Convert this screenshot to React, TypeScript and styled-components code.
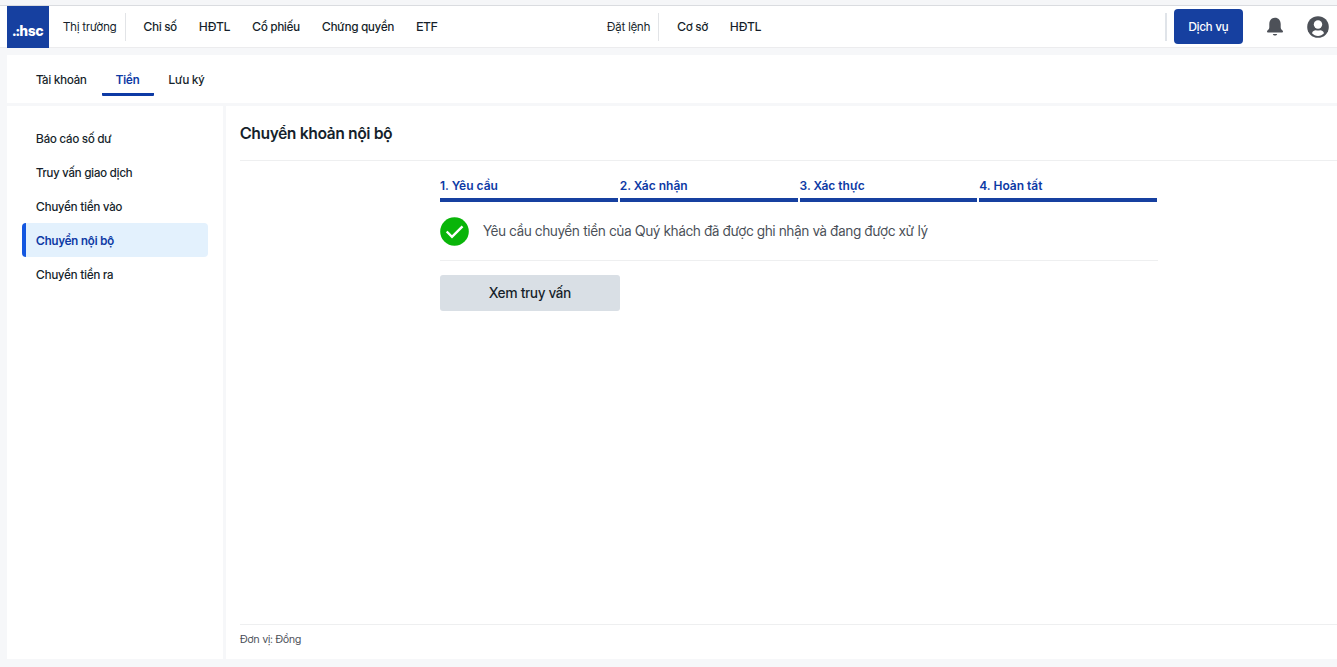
import React from "react";
import styled, { createGlobalStyle, css } from "styled-components";

const color = {
  brand: "#1640a0",
  link: "#0d3aa5",
  text: "#161f2b",
  muted: "#4a4f57",
  line: "#eeeff0",
  page: "#f6f7f9",
};

const GlobalStyle = createGlobalStyle`
  *, *::before, *::after { box-sizing: border-box; }
  body {
    margin: 0;
    background: ${color.page};
    color: ${color.text};
    font-family: "Inter Display", Inter, sans-serif;
    font-size: 12px;
    line-height: 16px;
  }
  a { color: inherit; text-decoration: none; }
  button { font-family: inherit; border: 0; cursor: pointer; }
`;

const Page = styled.div`
  min-height: 100vh;
  display: flex;
  flex-direction: column;
  padding-bottom: 8px;
`;

const TopStrip = styled.div`
  height: 6px;
  background: #f5f6f8;
  border-bottom: 1px solid #dadce0;
`;

const Header = styled.header`
  display: flex;
  align-items: center;
  height: 42px;
  padding: 0 8px 0 7px;
  background: #fff;
  border-bottom: 1px solid #ececee;
`;

const Logo = styled.a`
  display: flex;
  align-items: center;
  justify-content: center;
  width: 42px;
  height: 42px;
  padding-top: 8px;
  background: ${color.brand};
  color: #fff;
  font-size: 14px;
  font-weight: 800;
`;

const NavGroup = styled.nav<{ $wide?: boolean }>`
  display: flex;
  align-items: center;
  gap: 22px;
  white-space: nowrap;
  ${(p) => p.$wide && css`flex: 0 1 544px;`}
`;

const GroupTitle = styled.span`
  display: flex;
  align-items: center;
  height: 28px;
  padding-right: 8px;
  margin-right: -4px;
  border-right: 1px solid #e2e4e7;
`;

const NavLink = styled.a`
  font-weight: 500;
`;

const Actions = styled.div`
  display: flex;
  align-items: center;
  margin-left: auto;
  padding-left: 7px;
  border-left: 2px solid #e0e4e9;
  height: 28px;
`;

const ServiceButton = styled.button`
  width: 69px;
  height: 35px;
  padding: 0;
  margin-right: 21px;
  border-radius: 4px;
  background: ${color.brand};
  color: #fff;
  font-size: 12px;
  font-weight: 500;
`;

const IconButton = styled.button`
  display: flex;
  padding: 0;
  background: none;
  color: #4d5158;
  & + & { margin-left: 21px; }
`;

const Tabs = styled.nav`
  display: flex;
  gap: 1px;
  height: 48px;
  margin: 7px 0 0 7px;
  padding: 7px 15px;
  background: #fff;
`;

const Tab = styled.a<{ $active?: boolean }>`
  display: flex;
  align-items: center;
  height: 34px;
  padding: 4px 14px 0;
  border-bottom: 3px solid ${(p) => (p.$active ? color.link : "transparent")};
  border-radius: 1px;
  color: ${(p) => (p.$active ? color.link : "inherit")};
  font-weight: ${(p) => (p.$active ? 600 : 500)};
`;

const Body = styled.div`
  display: flex;
  flex: 1;
  gap: 3px;
  margin: 3px 0 0 7px;
`;

const Sidebar = styled.nav`
  width: 216px;
  flex: none;
  padding: 15px;
  background: #fff;
`;

const SideLink = styled.a<{ $active?: boolean }>`
  display: flex;
  align-items: center;
  height: 34px;
  padding: 2px 0 0 10px;
  border-left: 4px solid transparent;
  border-radius: 4px;
  font-weight: 500;
  ${(p) =>
    p.$active &&
    css`
      border-left-color: #1457e0;
      background: #e3f1fd;
      color: ${color.link};
      font-weight: 600;
    `}
`;

const Main = styled.main`
  display: flex;
  flex: 1;
  flex-direction: column;
  min-width: 0;
  padding-left: 14px;
  background: #fff;
`;

const Title = styled.h1`
  margin: 0;
  padding: 17px 0 16px;
  border-bottom: 1px solid ${color.line};
  font-size: 16px;
  line-height: 21px;
  font-weight: 600;
`;

const Transfer = styled.section`
  flex: 1;
  padding: 15px 179px 15px 200px;
`;

const Steps = styled.ol`
  display: grid;
  grid-template-columns: repeat(4, 1fr);
  gap: 2px;
  margin: 0;
  padding: 0 1px 0 0;
  list-style: none;
`;

const Step = styled.li`
  height: 26px;
  padding-top: 2px;
  border-bottom: 4px solid ${color.brand};
  color: ${color.link};
  font-family: Inter, sans-serif;
  font-weight: 600;
`;

const Notice = styled.div`
  display: flex;
  align-items: center;
  gap: 14px;
  height: 59px;
  border-bottom: 1px solid ${color.line};
  color: ${color.muted};
  font-size: 14px;
`;

const QueryButton = styled.button`
  width: 180px;
  height: 36px;
  margin-top: 14px;
  padding: 0 0 2px;
  border-radius: 3px;
  background: #d9dfe5;
  color: ${color.text};
  font-size: 14px;
  font-weight: 500;
`;

const Footer = styled.footer`
  padding: 6px 0 12px;
  border-top: 1px solid ${color.line};
  color: ${color.muted};
  font-size: 11px;
`;

const BellIcon = () => (
  <svg width="22" height="22" viewBox="0 0 22 22" fill="currentColor" aria-hidden="true">
    <path d="M11 1.700C7.600 1.700 5.300 4.200 5.300 8v3.200c0 1.700-.8 2.400-1.800 3.200-.9.800-.5 2.100.8 2.100h13.400c1.300 0 1.700-1.300.8-2.100-1-.8-1.800-1.500-1.800-3.200V8c0-3.800-2.300-6.300-5.700-6.300Z" />
    <path d="M8.800 18h4.400c-.4 1-1.200 1.500-2.200 1.500s-1.800-.5-2.200-1.500Z" />
  </svg>
);

const UserIcon = () => (
  <svg width="22" height="22" viewBox="0 0 22 22" aria-hidden="true">
    <circle cx="11" cy="11" r="10.800" fill="currentColor" />
    <circle cx="11" cy="8.500" r="4.200" fill="#fff" />
    <path d="M5 17.300c.6-2.200 2.300-3 3.600-3 .8 0 1.200.3 2.400.3s1.600-.3 2.400-.3c1.300 0 3 .8 3.600 3-1.500 1.600-3.600 2.600-6 2.600s-4.500-1-6-2.600Z" fill="#fff" />
  </svg>
);

const CheckIcon = () => (
  <svg width="29" height="29" viewBox="0 0 29 29" aria-hidden="true">
    <circle cx="14.500" cy="14.500" r="14.300" fill="#09b509" />
    <path d="M6.700 14.500l5.300 5.300L22.500 9.300" fill="none" stroke="#fff" strokeWidth="2.400" />
  </svg>
);

const marketLinks = ["Chỉ số", "HĐTL", "Cổ phiếu", "Chứng quyền", "ETF"];
const orderLinks = ["Cơ sở", "HĐTL"];
const tabs = ["Tài khoản", "Tiền", "Lưu ký"];
const sideLinks = [
  "Báo cáo số dư",
  "Truy vấn giao dịch",
  "Chuyển tiền vào",
  "Chuyển nội bộ",
  "Chuyển tiền ra",
];
const steps = ["1. Yêu cầu", "2. Xác nhận", "3. Xác thực", "4. Hoàn tất"];

const MarketNav = styled(NavGroup)`
  margin-left: 14px;
`;

export default function App() {
  return (
    <>
      <GlobalStyle />
      <Page>
        <TopStrip />
        <Header>
          <Logo href="#">.:hsc</Logo>
          <MarketNav $wide>
            <GroupTitle>Thị trường</GroupTitle>
            {marketLinks.map((label) => (
              <NavLink key={label} href="#">{label}</NavLink>
            ))}
          </MarketNav>
          <NavGroup>
            <GroupTitle>Đặt lệnh</GroupTitle>
            {orderLinks.map((label) => (
              <NavLink key={label} href="#">{label}</NavLink>
            ))}
          </NavGroup>
          <Actions>
            <ServiceButton type="button">Dịch vụ</ServiceButton>
            <IconButton type="button" aria-label="Thông báo"><BellIcon /></IconButton>
            <IconButton type="button" aria-label="Cá nhân"><UserIcon /></IconButton>
          </Actions>
        </Header>
        <Tabs>
          {tabs.map((label) => (
            <Tab key={label} href="#" $active={label === "Tiền"}>{label}</Tab>
          ))}
        </Tabs>
        <Body>
          <Sidebar>
            {sideLinks.map((label) => (
              <SideLink key={label} href="#" $active={label === "Chuyển nội bộ"}>{label}</SideLink>
            ))}
          </Sidebar>
          <Main>
            <Title>Chuyển khoản nội bộ</Title>
            <Transfer>
              <Steps>
                {steps.map((label) => (
                  <Step key={label}>{label}</Step>
                ))}
              </Steps>
              <Notice role="status">
                <CheckIcon />
                <span>Yêu cầu chuyển tiền của Quý khách đã được ghi nhận và đang được xử lý</span>
              </Notice>
              <QueryButton type="button">Xem truy vấn</QueryButton>
            </Transfer>
            <Footer>Đơn vị: Đồng</Footer>
          </Main>
        </Body>
      </Page>
    </>
  );
}
